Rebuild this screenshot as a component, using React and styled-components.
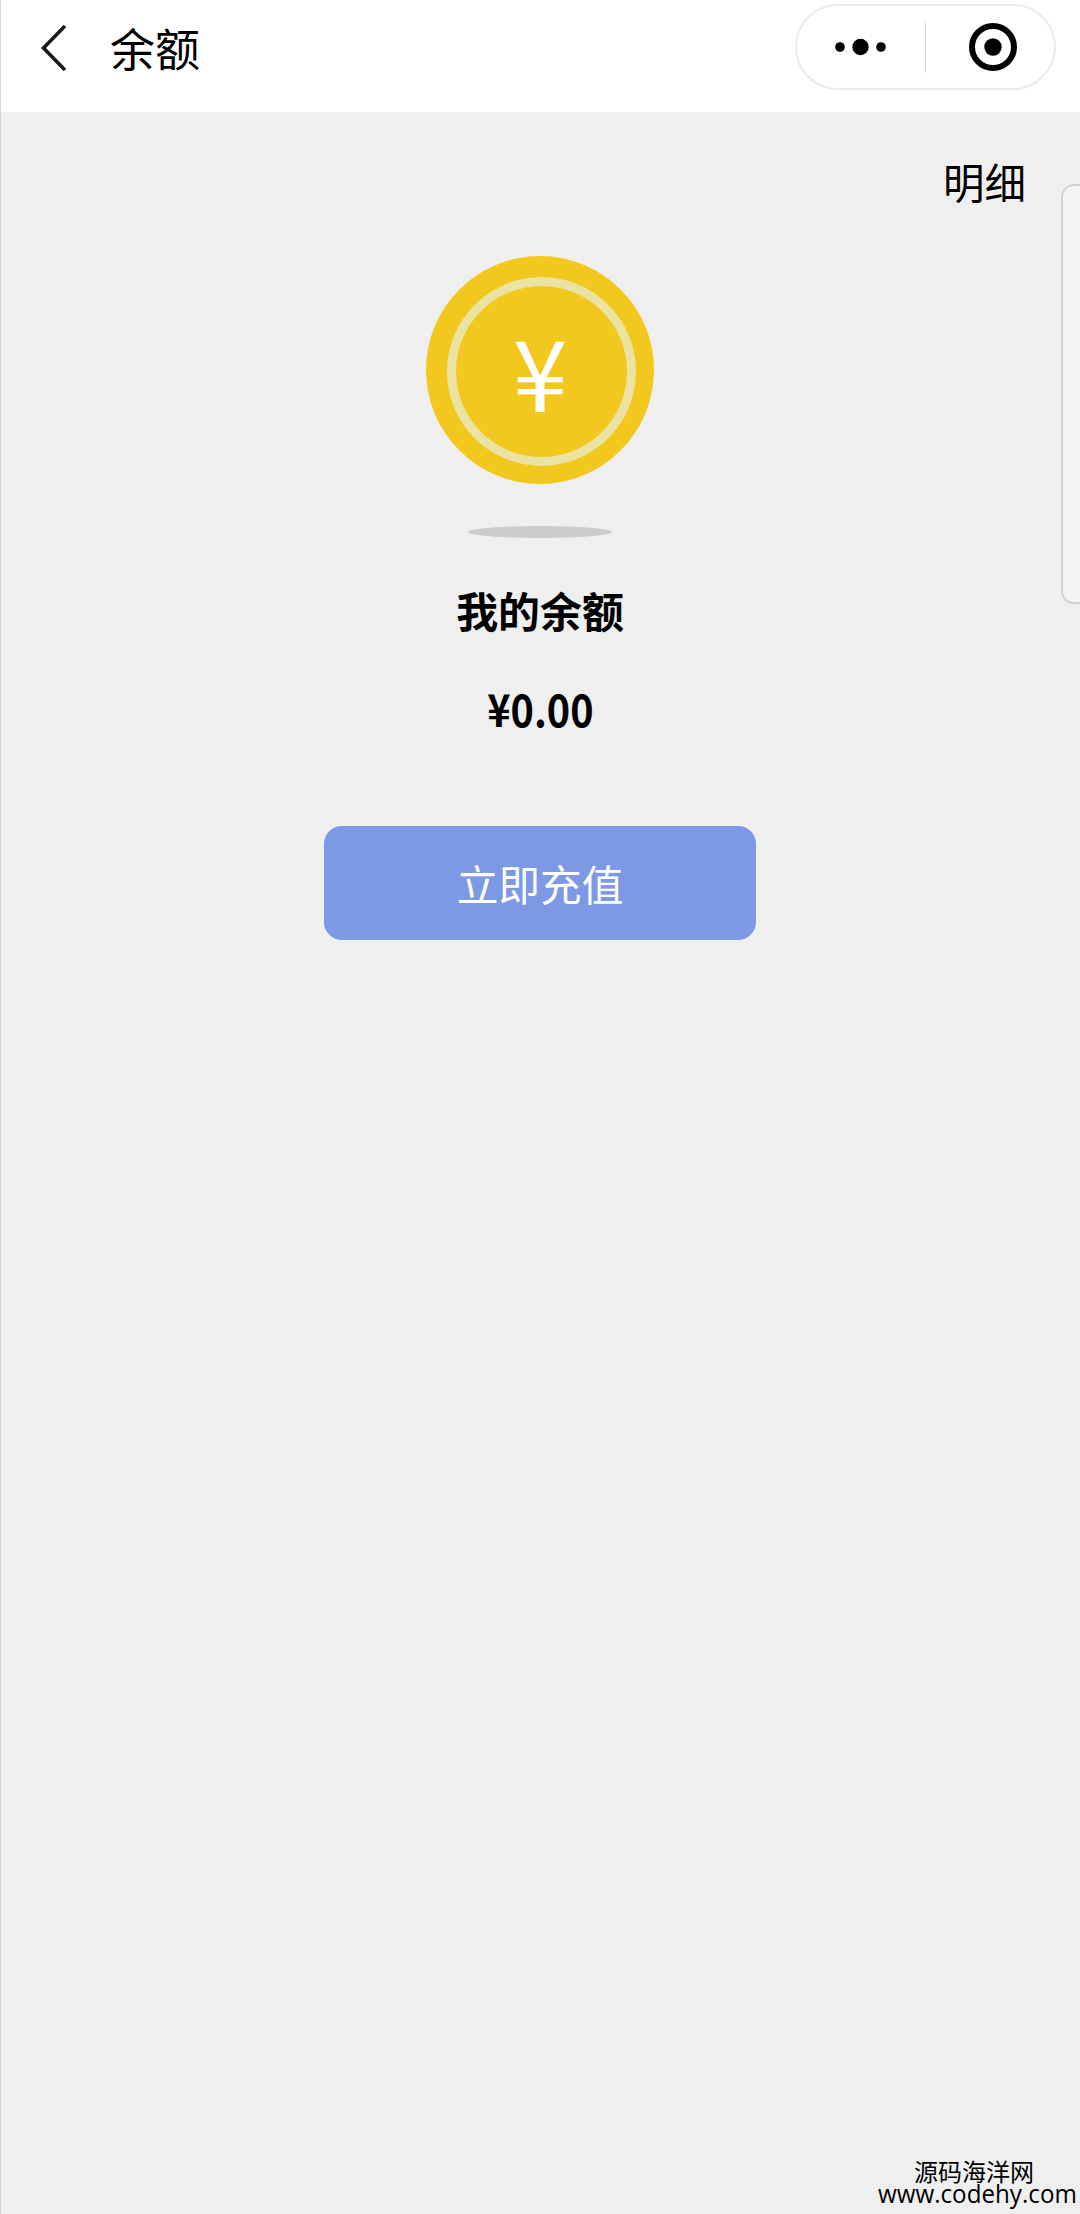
import React from 'react'
import styled, { createGlobalStyle } from 'styled-components'

const GlobalStyle = createGlobalStyle`
	* {
		box-sizing: border-box;
	}

	body {
		margin: 0;
		background: #efefef;
	}
`

const Page = styled.div`
	position: relative;
	display: flex;
	flex-direction: column;
	width: 1080px;
	height: 2214px;
	overflow: hidden;
	background: #efefef;
	border-left: 1px solid #d6d6d6;
	color: #000;
	font-family: 'Noto Sans CJK SC', sans-serif;
`

const NavBar = styled.header`
	display: flex;
	justify-content: space-between;
	height: 112px;
	padding: 4px 24px 0 39px;
	background: #fff;
`

const NavLeft = styled.div`
	display: flex;
	align-items: center;
	height: 88px;
	gap: 42px;
`

const Title = styled.h1`
	margin: 0 0 1px;
	font-size: 45px;
	font-weight: 400;
	line-height: 60px;
`

const Capsule = styled.div`
	display: flex;
	align-items: center;
	width: 261px;
	height: 86px;
	border: 2px solid #ebebeb;
	border-radius: 43px;
`

const CapsuleButton = styled.button`
	display: flex;
	flex: none;
	align-items: center;
	justify-content: center;
	width: ${({ $width }) => $width}px;
	height: 100%;
	padding: 0;
	border: 0;
	background: none;
`

const Divider = styled.div`
	flex: none;
	width: 1px;
	height: 52px;
	background: #dcdcdc;
`

const Main = styled.main`
	display: flex;
	flex-direction: column;
	align-items: center;
	padding-right: 1px;
`

const Detail = styled.a`
	align-self: flex-end;
	margin: 39px 53px 0 0;
	font-size: 41.5px;
	line-height: 60px;
`

const Coin = styled.div`
	display: flex;
	align-items: center;
	justify-content: center;
	width: 228px;
	height: 228px;
	margin-top: 45px;
	border-radius: 50%;
	background: #f3c81e;
`

const CoinRing = styled.div`
	display: flex;
	align-items: center;
	justify-content: center;
	width: 189px;
	height: 189px;
	margin: 3px 0 0 3px;
	border: 9px solid #eae3a2;
	border-radius: 50%;
`

const Yen = styled.span`
	margin: 0 3px 6px 0;
	color: #fff;
	font-size: 98.5px;
	line-height: 100px;
`

const Shadow = styled.div`
	width: 144px;
	height: 12px;
	margin-top: 42px;
	border-radius: 50%;
	background: #cbcbcb;
`

const Label = styled.div`
	margin-top: 42px;
	font-size: 41.9px;
	font-weight: 700;
	line-height: 60px;
`

const Amount = styled.div`
	margin-top: 38px;
	font-size: 45px;
	font-weight: 700;
	line-height: 60px;
	transform: scaleX(0.88);
`

const RechargeButton = styled.button`
	width: 432px;
	height: 114px;
	margin-top: 88px;
	padding: 0;
	border: 0;
	border-radius: 18px;
	background: #7d98e4;
	color: #fff;
	font-family: inherit;
	font-size: 41.7px;
	line-height: 60px;
`

const SidePanel = styled.div`
	position: absolute;
	top: 184px;
	right: -20px;
	width: 39px;
	height: 420px;
	border: 2px solid #d2d2d2;
	border-radius: 13px;
	background: #f3f3f3;
`

const Watermark = styled.footer`
	display: flex;
	flex-direction: column;
	align-items: flex-end;
	margin-top: auto;
	padding: 0 3px 10px 0;
`

const SiteName = styled.div`
	margin-right: 43px;
	font-size: 24px;
	line-height: 24px;
`

const SiteUrl = styled.div`
	font-family: 'Open Sans', sans-serif;
	font-size: 26px;
	font-weight: 500;
	line-height: 21px;
	transform: scaleX(0.93);
	transform-origin: right;
`

const BackIcon = () => (
	<svg width="28" height="48" viewBox="0 0 28 48" fill="none" stroke="#1a1a1a" strokeWidth="3.6">
		<path d="M25 2 3.5 24 25 46" />
	</svg>
)

const MoreIcon = () => (
	<svg width="52" height="18" viewBox="0 0 52 18">
		<circle cx="5" cy="9" r="4.8" />
		<circle cx="25.5" cy="9" r="8.2" />
		<circle cx="46" cy="9" r="4.8" />
	</svg>
)

const CloseIcon = () => (
	<svg width="50" height="50" viewBox="0 0 50 50">
		<circle cx="25" cy="25" r="21" fill="none" stroke="#000" strokeWidth="6" />
		<circle cx="25" cy="25" r="8.7" />
	</svg>
)

const App = () => (
	<>
		<GlobalStyle />
		<Page>
			<NavBar>
				<NavLeft>
					<BackIcon />
					<Title>余额</Title>
				</NavLeft>
				<Capsule>
					<CapsuleButton $width={128}>
						<MoreIcon />
					</CapsuleButton>
					<Divider />
					<CapsuleButton $width={134}>
						<CloseIcon />
					</CapsuleButton>
				</Capsule>
			</NavBar>
			<Main>
				<Detail>明细</Detail>
				<Coin>
					<CoinRing>
						<Yen>¥</Yen>
					</CoinRing>
				</Coin>
				<Shadow />
				<Label>我的余额</Label>
				<Amount>¥0.00</Amount>
				<RechargeButton>立即充值</RechargeButton>
			</Main>
			<SidePanel />
			<Watermark>
				<SiteName>源码海洋网</SiteName>
				<SiteUrl>www.codehy.com</SiteUrl>
			</Watermark>
		</Page>
	</>
)

export default App
